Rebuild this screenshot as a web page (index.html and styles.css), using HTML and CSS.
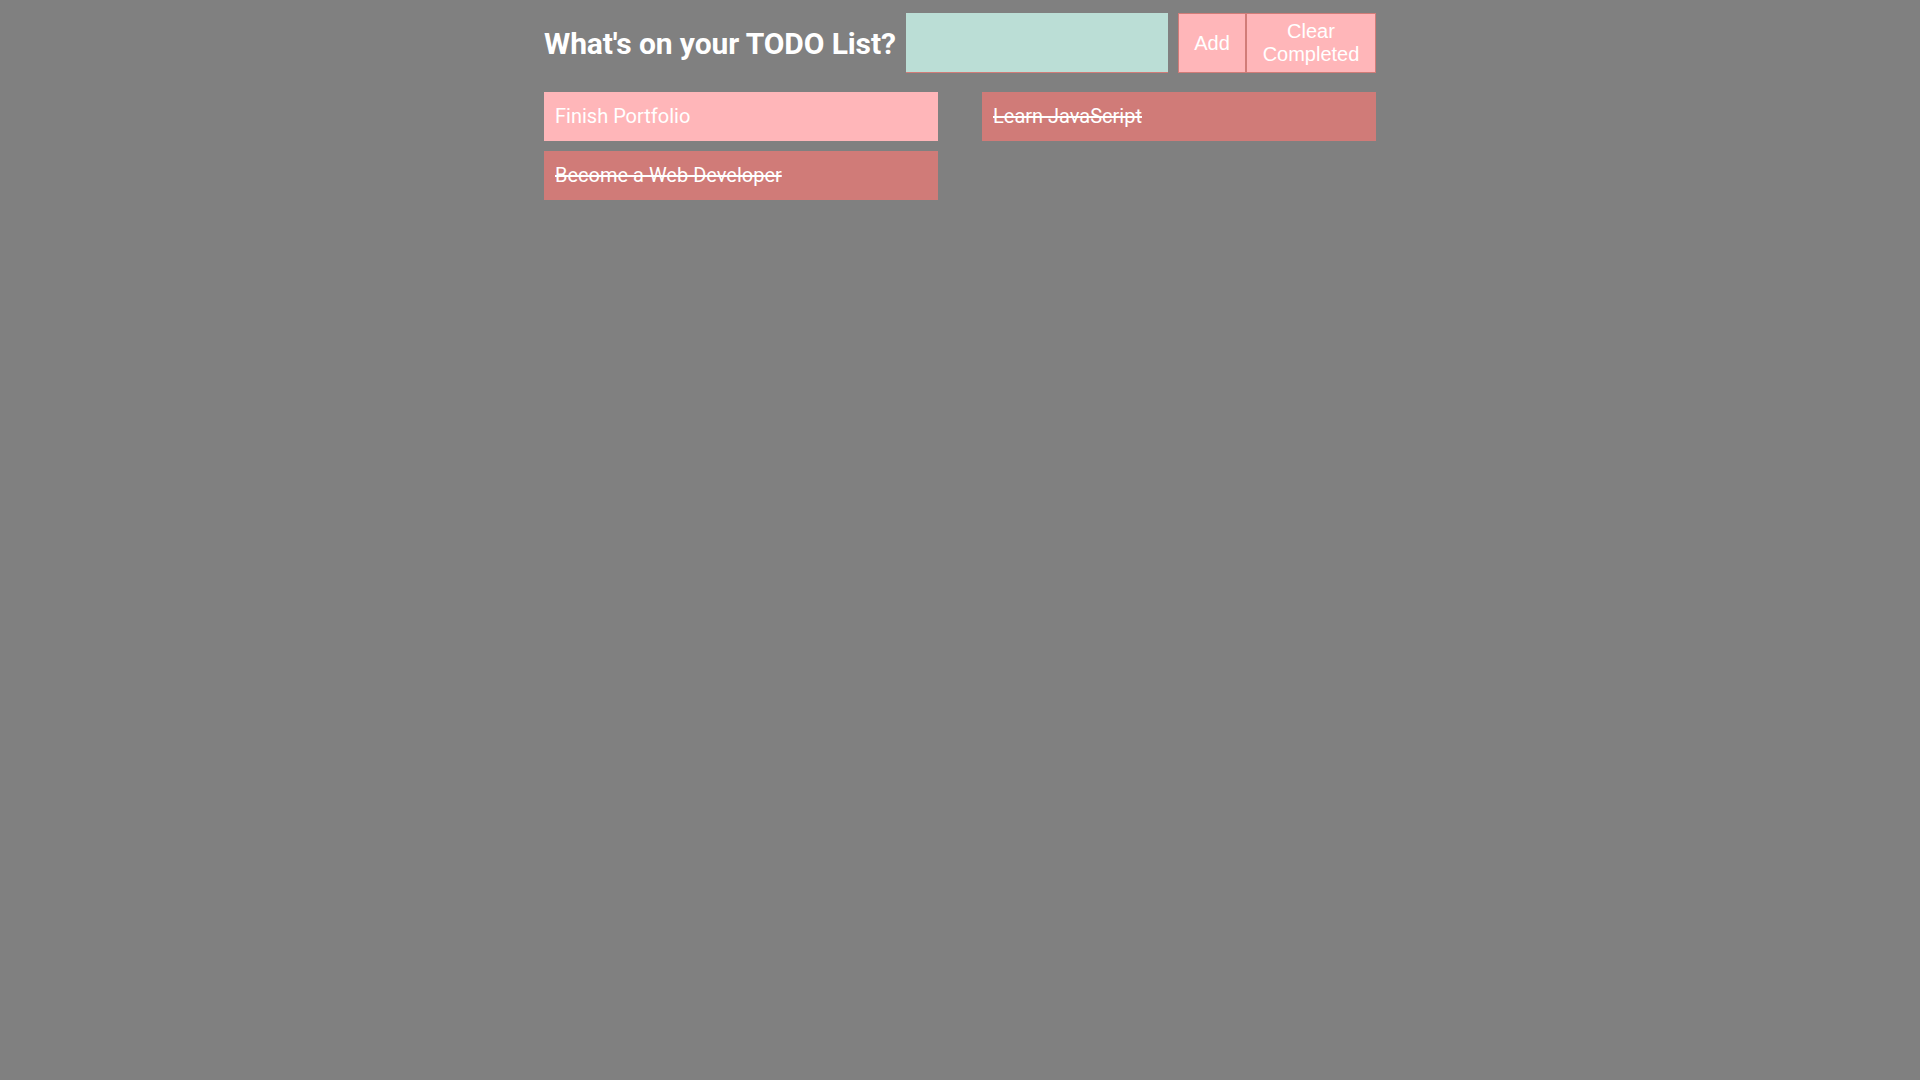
FILE: index.html
```html
<!DOCTYPE html>
<html lang="en">
<head>
<meta charset="utf-8">
<title>TODO List</title>
<link rel="stylesheet" href="styles.css">
</head>
<body>
<div class="app">
  <header class="header">
    <h1 class="title">What's on your TODO List?</h1>
    <input class="new-todo" type="text" aria-label="New todo">
    <div class="actions">
      <button class="btn btn-add">Add</button>
      <button class="btn btn-clear">Clear Completed</button>
    </div>
  </header>
  <main class="lists">
    <ul class="column">
      <li class="todo">Finish Portfolio</li>
      <li class="todo done">Become a Web Developer</li>
    </ul>
    <ul class="column">
      <li class="todo done">Learn JavaScript</li>
    </ul>
  </main>
</div>
</body>
</html>
```
FILE: styles.css
```css
html, body {
  margin: 0;
  padding: 0;
  background: #808080;
  font-family: Roboto, "Liberation Sans", sans-serif;
  color: #ffffff;
}

.app {
  width: 832px;
  margin: 0 auto;
  padding-top: 13px;
}

.header {
  display: flex;
  align-items: center;
  height: 60px;
}

.title {
  margin: 0 14px 0 0;
  width: 348px;
  font-family: Roboto, sans-serif;
  font-weight: 700;
  font-size: 30px;
  letter-spacing: -0.1px;
  white-space: nowrap;
  color: #ffffff;
}

.new-todo {
  box-sizing: border-box;
  width: 262px;
  height: 60px;
  border: none;
  border-bottom: 1px solid #d17c78;
  background: #bbded6;
  padding: 0 10px;
  font-size: 20px;
  outline: none;
  margin: 0;
}

.actions {
  display: flex;
  margin-left: 10px;
  height: 60px;
}

.btn {
  box-sizing: border-box;
  height: 60px;
  margin: 0;
  padding: 0 14px;
  background: #ffb6b9;
  border: 1px solid #d17c78;
  color: #ffffff;
  font-family: "Liberation Sans", Arial, sans-serif;
  font-size: 20px;
  line-height: 23px;
}

.btn-add {
  width: 68px;
  padding: 0;
}

.btn-clear {
  width: 130px;
  padding: 0 8px;
}

.lists {
  display: grid;
  grid-template-columns: 394px 394px;
  column-gap: 44px;
  margin-top: 19px;
}

.column {
  list-style: none;
  margin: 0;
  padding: 0;
  display: flex;
  flex-direction: column;
  gap: 10px;
}

.todo {
  box-sizing: border-box;
  height: 49px;
  display: flex;
  align-items: center;
  padding: 0 11px 2px;
  background: #ffb6b9;
  font-family: Roboto, sans-serif;
  font-size: 20px;
  color: #ffffff;
}

.todo.done {
  background: #d07b78;
  text-decoration: line-through;
}
```
